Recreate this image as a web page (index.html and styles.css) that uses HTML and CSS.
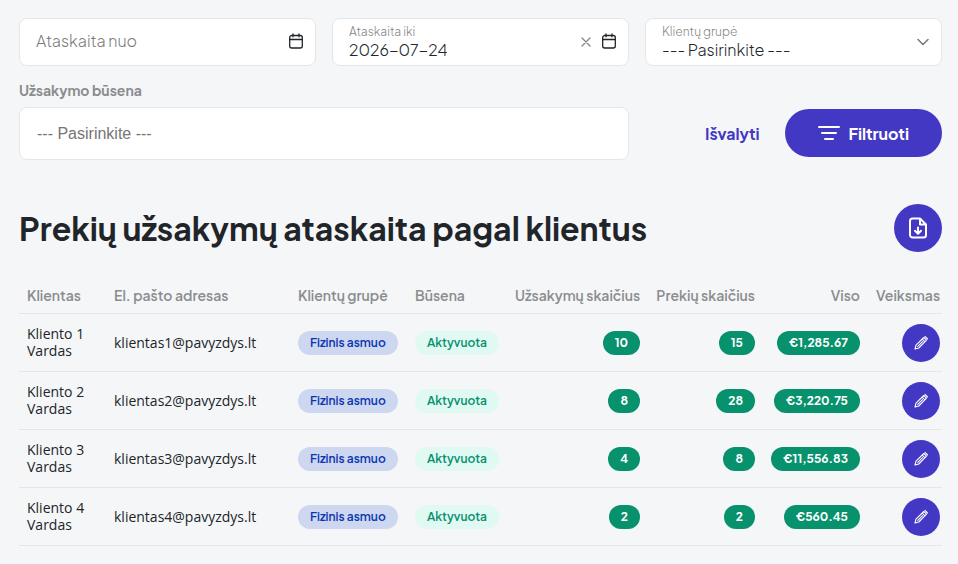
FILE: index.html
```
<!DOCTYPE html>
<html lang="lt">
<head>
    <meta charset="UTF-8">
    <meta name="viewport" content="width=device-width, initial-scale=1">
    <title>Prekių užsakymų ataskaita pagal klientus</title>
    <link rel="stylesheet" href="styles.css">
</head>
<body>

    <svg class="sprite" aria-hidden="true">
        <symbol id="icon-calendar" viewBox="0 0 16 16">
            <rect x="1.7" y="2.500" width="12.6" height="12.500" rx="2"/>
            <path d="M2 6.500h12M5 .8v3M11 .8v3"/>
        </symbol>
        <symbol id="icon-pencil" viewBox="0 0 16 16">
            <path d="M2 14l1-3.800 7.800-7.700 2.700 2.700-7.700 7.800zM12 1.400l2.600 2.600M9.300 4.200l2.600 2.600M4.800 11.300l4.700-4.700"/>
        </symbol>
    </svg>

    <div class="container">
        <form class="filters">
            <div class="field">
                <input id="dateFrom" type="text" placeholder="Ataskaita nuo" aria-label="Ataskaita nuo">
                <div class="field-icons">
                    <button type="button" class="icon-btn" aria-label="Kalendorius"><svg class="icon-calendar"><use href="#icon-calendar"/></svg></button>
                </div>
            </div>
            <div class="field floating">
                <label for="dateTo">Ataskaita iki</label>
                <input id="dateTo" type="text" value="2026-07-24">
                <div class="field-icons">
                    <button type="button" class="icon-btn" aria-label="Išvalyti datą"><svg class="icon-clear" viewBox="0 0 10 10"><path d="M1 1l8 8M9 1l-8 8"/></svg></button>
                    <button type="button" class="icon-btn" aria-label="Kalendorius"><svg class="icon-calendar"><use href="#icon-calendar"/></svg></button>
                </div>
            </div>
            <div class="field floating">
                <label for="group">Klientų grupė</label>
                <select id="group">
                    <option>--- Pasirinkite ---</option>
                    <option>Fizinis asmuo</option>
                </select>
                <svg class="icon-chevron" viewBox="0 0 12 8"><path d="M1 1.500l5 5 5-5"/></svg>
            </div>

            <div class="status">
                <label for="status">Užsakymo būsena</label>
                <input id="status" type="text" placeholder="--- Pasirinkite ---">
            </div>
            <div class="actions">
                <button type="reset" class="btn-link">Išvalyti</button>
                <button type="submit" class="btn">
                    <svg class="icon-filter" viewBox="0 0 22 16"><path d="M1 2h20M4 8h14M7 14h8"/></svg>
                    Filtruoti
                </button>
            </div>
        </form>

        <div class="heading">
            <h1>Prekių užsakymų ataskaita pagal klientus</h1>
            <button type="button" class="round-btn large" aria-label="Eksportuoti">
                <svg class="icon-export" viewBox="0 0 24 24"><path d="M14 2.500H6.500a2.500 2.500 0 0 0-2.500 2.500v14a2.500 2.500 0 0 0 2.500 2.500h11a2.500 2.500 0 0 0 2.500-2.500V8.500zM14 2.500v6h6M12 11.500v6M9 14.700l3 3 3-3"/></svg>
            </button>
        </div>

        <table>
            <thead>
                <tr>
                    <th class="col-client">Klientas</th>
                    <th>El. pašto adresas</th>
                    <th class="col-group">Klientų grupė</th>
                    <th class="col-status">Būsena</th>
                    <th class="col-orders num">Užsakymų skaičius</th>
                    <th class="col-items num">Prekių skaičius</th>
                    <th class="col-total num">Viso</th>
                    <th class="col-action num">Veiksmas</th>
                </tr>
            </thead>
            <tbody>
                <tr>
                    <td class="plain">Kliento 1 Vardas</td>
                    <td class="plain">klientas1@pavyzdys.lt</td>
                    <td><span class="badge blue">Fizinis asmuo</span></td>
                    <td><span class="badge mint">Aktyvuota</span></td>
                    <td class="num"><span class="badge green">10</span></td>
                    <td class="num"><span class="badge green">15</span></td>
                    <td class="num"><span class="badge green">€1,285.67</span></td>
                    <td class="num"><button type="button" class="round-btn" aria-label="Redaguoti"><svg class="icon-pencil"><use href="#icon-pencil"/></svg></button></td>
                </tr>
                <tr>
                    <td class="plain">Kliento 2 Vardas</td>
                    <td class="plain">klientas2@pavyzdys.lt</td>
                    <td><span class="badge blue">Fizinis asmuo</span></td>
                    <td><span class="badge mint">Aktyvuota</span></td>
                    <td class="num"><span class="badge green">8</span></td>
                    <td class="num"><span class="badge green">28</span></td>
                    <td class="num"><span class="badge green">€3,220.75</span></td>
                    <td class="num"><button type="button" class="round-btn" aria-label="Redaguoti"><svg class="icon-pencil"><use href="#icon-pencil"/></svg></button></td>
                </tr>
                <tr>
                    <td class="plain">Kliento 3 Vardas</td>
                    <td class="plain">klientas3@pavyzdys.lt</td>
                    <td><span class="badge blue">Fizinis asmuo</span></td>
                    <td><span class="badge mint">Aktyvuota</span></td>
                    <td class="num"><span class="badge green">4</span></td>
                    <td class="num"><span class="badge green">8</span></td>
                    <td class="num"><span class="badge green">€11,556.83</span></td>
                    <td class="num"><button type="button" class="round-btn" aria-label="Redaguoti"><svg class="icon-pencil"><use href="#icon-pencil"/></svg></button></td>
                </tr>
                <tr>
                    <td class="plain">Kliento 4 Vardas</td>
                    <td class="plain">klientas4@pavyzdys.lt</td>
                    <td><span class="badge blue">Fizinis asmuo</span></td>
                    <td><span class="badge mint">Aktyvuota</span></td>
                    <td class="num"><span class="badge green">2</span></td>
                    <td class="num"><span class="badge green">2</span></td>
                    <td class="num"><span class="badge green">€560.45</span></td>
                    <td class="num"><button type="button" class="round-btn" aria-label="Redaguoti"><svg class="icon-pencil"><use href="#icon-pencil"/></svg></button></td>
                </tr>
            </tbody>
        </table>
    </div>

</body>
</html>
```
FILE: styles.css
```
* {
    box-sizing: border-box;
}
body {
    margin: 0;
    background-color: #f5f6f8;
    color: #212529;
    font-family: 'Plus Jakarta Sans', Inter, sans-serif;
    font-size: 14px;
}
button, input, select {
    font-family: inherit;
}
button {
    border: none;
    padding: 0;
    background: none;
    cursor: pointer;
}
svg {
    display: block;
    fill: none;
    stroke: currentColor;
    stroke-linecap: round;
    stroke-linejoin: round;
}
.sprite {
    position: absolute;
    width: 0;
    height: 0;
}
.container {
    padding: 18px 16px 18px 19px;
}

/* filters */
.filters {
    display: grid;
    grid-template-columns: repeat(3, 1fr);
    gap: 16px;
}
.field {
    position: relative;
    height: 48px;
    background-color: #fff;
    border: 1px solid #e4e7ea;
    border-radius: 8px;
}
.field label {
    position: absolute;
    top: 5px;
    left: 16px;
    font-size: 12px;
    font-weight: 300;
    line-height: 16px;
    color: #858585;
}
.field input,
.field select {
    appearance: none;
    display: block;
    width: 100%;
    height: 100%;
    padding: 0 16px 3px;
    border: none;
    border-radius: 8px;
    background: none;
    color: #212529;
    font-size: 16px;
    font-weight: 300;
}
.floating input,
.floating select {
    padding: 14px 16px 0;
}
.field input::placeholder {
    color: #7b7b7b;
    opacity: 1;
}
.field-icons {
    position: absolute;
    top: 0;
    right: 11px;
    height: 44px;
    display: flex;
    align-items: center;
    gap: 10px;
}
.icon-btn {
    color: #212529;
}
.icon-calendar {
    width: 16px;
    height: 16px;
    stroke-width: 1.3;
}
.icon-clear {
    width: 10px;
    height: 10px;
    margin-top: 2px;
    color: #858585;
    stroke-width: 1.3;
}
.icon-chevron {
    position: absolute;
    top: 19px;
    right: 12px;
    width: 12px;
    height: 8px;
    color: #777;
    stroke-width: 1.5;
}
.status {
    grid-column: span 2;
}
.status label {
    display: block;
    margin-bottom: 9px;
    color: #8a8d8f;
    font-weight: 700;
    line-height: 16px;
}
.status input {
    display: block;
    width: 100%;
    height: 53px;
    padding: 0 17px;
    border: 1px solid #e4e7ea;
    border-radius: 8px;
    background-color: #fff;
    font-family: 'Liberation Sans', Arial, sans-serif;
    font-size: 16px;
}
.status input::placeholder {
    color: #757575;
    opacity: 1;
}
.actions {
    display: flex;
    justify-content: flex-end;
    align-items: flex-end;
    gap: 25px;
    padding-bottom: 3px;
}
.btn,
.btn-link {
    height: 48px;
    font-size: 16px;
    font-weight: 700;
}
.btn {
    display: flex;
    align-items: center;
    gap: 9px;
    padding: 0 33px;
    border-radius: 24px;
    background-color: #4338c4;
    color: #fff;
}
.btn-link {
    color: #4338c4;
}
.icon-filter {
    width: 22px;
    height: 16px;
    stroke-width: 2;
}

/* heading */
.heading {
    display: flex;
    justify-content: space-between;
    align-items: center;
    margin-top: 44px;
}
h1 {
    margin: 0;
    font-size: 32px;
    font-weight: 700;
    line-height: 40px;
}
.round-btn {
    display: inline-flex;
    align-items: center;
    justify-content: center;
    width: 38px;
    height: 38px;
    border-radius: 50%;
    background-color: #4338c4;
    color: #fff;
    vertical-align: middle;
}
.round-btn.large {
    width: 48px;
    height: 48px;
}
.icon-export {
    width: 24px;
    height: 24px;
    stroke-width: 2;
}
.icon-pencil {
    width: 16px;
    height: 16px;
    stroke-width: 1.1;
}

/* table */
table {
    width: 100%;
    margin-top: 25px;
    border-collapse: collapse;
    table-layout: fixed;
}
th, td {
    padding: 0 8px;
    border-bottom: 1px solid #e4e7ea;
    text-align: left;
}
th {
    height: 36px;
    color: #8a8d8f;
    font-size: 14px;
    font-weight: 600;
    white-space: nowrap;
}
td {
    height: 58px;
    padding-top: 2px;
}
th:last-child,
td:last-child {
    padding-right: 2px;
}
.num {
    text-align: right;
}
.plain {
    padding-top: 0;
    font-family: 'Open Sans', 'Noto Sans', sans-serif;
    font-size: 14px;
    line-height: 17px;
}
.col-client { width: 87px; }
.col-group { width: 117px; }
.col-status { width: 100px; }
.col-orders { width: 141px; }
.col-items { width: 115px; }
.col-total { width: 105px; }
.col-action { width: 74px; }

.badge {
    display: inline-block;
    padding: 0 12px;
    border-radius: 12px;
    font-size: 12px;
    font-weight: 600;
    line-height: 24px;
    vertical-align: middle;
    white-space: nowrap;
}
.blue {
    background-color: #cdd7f0;
    color: #0a36b0;
}
.mint {
    background-color: #e0faf3;
    color: #07916d;
}
.green {
    background-color: #07916d;
    color: #fff;
    font-weight: 700;
}
```
